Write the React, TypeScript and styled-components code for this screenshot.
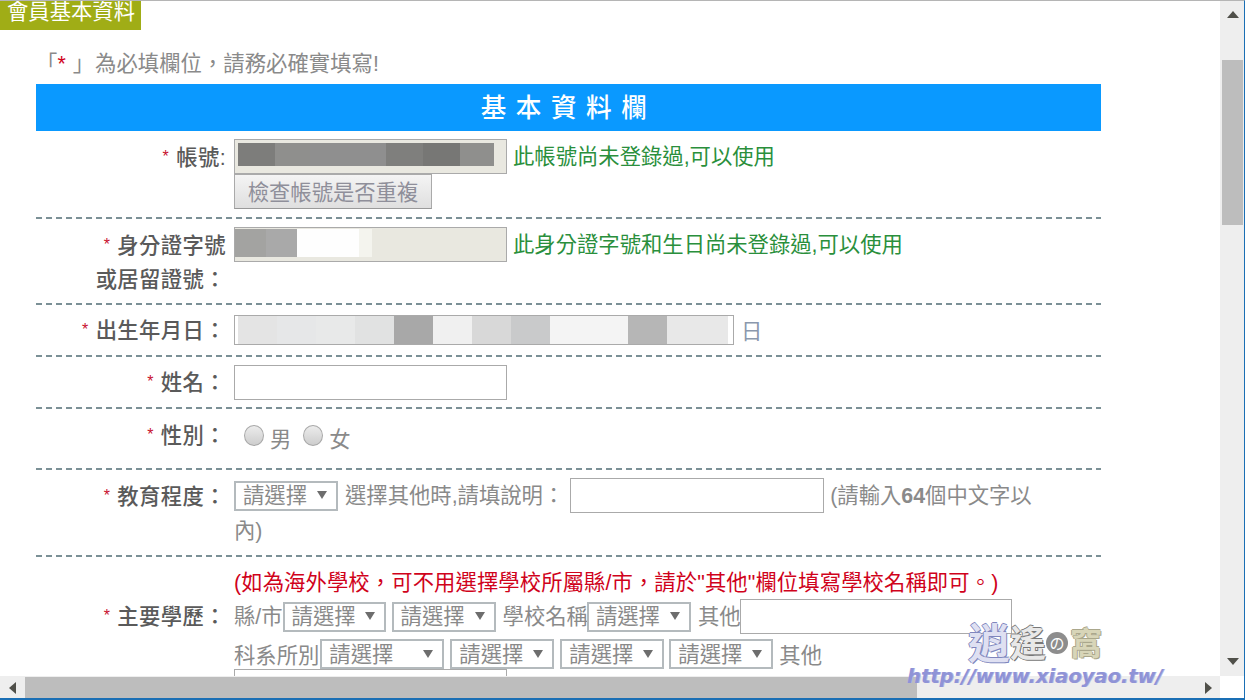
import React from 'react';
import styled, { createGlobalStyle } from 'styled-components';

const GlobalStyle = createGlobalStyle`
  html, body {
    margin: 0;
    padding: 0;
    height: 700px;
    overflow: hidden;
    background: #fff;
  }
`;

const Window = styled.div`
  position: relative;
  box-sizing: border-box;
  width: 1245px;
  height: 700px;
  display: flex;
  flex-direction: column;
  border-top: 1px solid #b5b5b5;
  border-right: 1px solid #1a6fb5;
  border-bottom: 2px solid #1a6fb5;
  font-family: 'Liberation Sans', 'Noto Sans CJK TC', sans-serif;
  font-size: 21.33px;
  color: #8a8a8a;
  background: #fff;
`;

const Body = styled.div`
  flex: 1;
  min-height: 0;
  display: flex;
`;

const Content = styled.div`
  flex: 1;
  min-width: 0;
  overflow: hidden;
`;

const Tab = styled.div`
  width: 141px;
  height: 29px;
  box-sizing: border-box;
  padding-left: 7px;
  background: #a0ad16;
  color: #fff;
  line-height: 22px;
`;

const Notice = styled.div`
  display: flex;
  margin: 19px 0 0 36px;
  height: 35px;
  line-height: 30px;
  color: #8a8a8a;
  letter-spacing: 0.05px;
`;

const Bracket = styled.span`
  width: 59px;
  white-space: pre;
`;

const Red = styled.span`
  color: #d0021b;
  margin: 0 7px 0 0;
`;

const Form = styled.div`
  width: 1065px;
  margin-left: 36px;
`;

const Banner = styled.div`
  box-sizing: border-box;
  height: 47px;
  padding-top: 2px;
  background: #0a99ff;
  color: #fff;
  font-size: 25.6px;
  font-weight: 500;
  letter-spacing: 9.5px;
  line-height: 45px;
  text-align: center;
`;

const Row = styled.div<{ $h: number }>`
  box-sizing: border-box;
  height: ${p => p.$h}px;
  display: grid;
  grid-template-columns: 190px 1fr;
  column-gap: 8px;
  background: repeating-linear-gradient(90deg, #7b9096 0 6px, transparent 6px 10px) left bottom / 100% 2px no-repeat;
`;

const LastRow = styled.div`
  display: grid;
  grid-template-columns: 190px 1fr;
  column-gap: 8px;
`;

const Label = styled.div<{ $top?: number }>`
  padding-top: ${p => p.$top ?? 9}px;
  text-align: right;
  line-height: 34px;
  font-weight: 500;
  letter-spacing: 0.4px;
  color: #5a5a5a;
`;

const Star = styled.span`
  color: #c8102e;
  font-size: 16px;
  font-weight: 400;
  vertical-align: 3px;
  margin-right: 7px;
`;

const Field = styled.div<{ $top?: number }>`
  padding-top: ${p => p.$top ?? 8}px;
  min-width: 0;
`;

const Line = styled.div<{ $h?: number; $mt?: number }>`
  display: flex;
  align-items: center;
  height: ${p => p.$h ?? 35}px;
  margin-top: ${p => p.$mt ?? 0}px;
  white-space: nowrap;
`;

const Input = styled.div<{ $w?: number; $h?: number; $filled?: boolean }>`
  box-sizing: border-box;
  flex: none;
  display: flex;
  width: ${p => p.$w ?? 273}px;
  height: ${p => p.$h ?? 35}px;
  border: 1px solid #aaa;
  background: ${p => (p.$filled ? '#e9e8e0' : '#fff')};
`;

const Mosaic = styled.div<{ $x: number; $y: number; $h: number }>`
  display: flex;
  height: ${p => p.$h}px;
  margin: ${p => p.$y}px 0 0 ${p => p.$x}px;
`;

const Cell = styled.div<{ $w: number; $c: string }>`
  width: ${p => p.$w}px;
  height: 100%;
  background: ${p => p.$c};
`;

const Status = styled.span`
  margin-left: 6px;
  padding-bottom: 4px;
  color: #2a8f3c;
`;

const CheckButton = styled.button`
  box-sizing: border-box;
  display: block;
  width: 198px;
  height: 35px;
  padding: 0 0 4px;
  border: 1px solid #aaa;
  border-bottom-color: #999;
  background: linear-gradient(#f4f4f4, #dfdfdf);
  color: #8f8f9a;
  font: inherit;
`;

const Select = styled.span<{ $w: number; $l?: number }>`
  box-sizing: border-box;
  flex: none;
  display: inline-flex;
  align-items: center;
  justify-content: space-between;
  width: ${p => p.$w}px;
  height: 30px;
  margin-left: ${p => p.$l ?? 0}px;
  padding: 0 9px 4px 7px;
  border: 2px solid #b4babd;
  background: #fff;
  color: #8a8a8a;
`;

const Arrow = styled.svg`
  width: 10px;
  height: 8px;
  margin-top: 3px;
  fill: #6d6d6d;
`;

const Word = styled.span<{ $l?: number; $r?: number; $up?: number; $tint?: boolean }>`
  margin-left: ${p => p.$l ?? 0}px;
  margin-right: ${p => p.$r ?? 0}px;
  padding-bottom: ${p => p.$up ?? 0}px;
  color: ${p => (p.$tint ? '#8b98ad' : 'inherit')};
`;

const Strong = styled.b`
  font-weight: 700;
`;

const Radio = styled.span`
  box-sizing: border-box;
  display: inline-block;
  flex: none;
  width: 20px;
  height: 21px;
  border-radius: 50%;
  border: 1px solid #a8a8a8;
  background: linear-gradient(#ececec, #cdcdcd);
`;

const RadioLine = styled.div`
  display: flex;
  align-items: flex-start;
  padding: 16px 0 0 10px;
`;

const RadioText = styled.span`
  margin: 0 12px 0 6px;
  line-height: 30px;
`;

const Wrapped = styled.div`
  line-height: 36px;
`;

const Warn = styled.div`
  height: 33px;
  line-height: 34px;
  color: #d0021b;
  letter-spacing: 0.1px;
  white-space: nowrap;
`;

const VBar = styled.div`
  flex: none;
  width: 24px;
  display: flex;
  flex-direction: column;
  background: #eeeeee;
`;

const VThumb = styled.div`
  width: 21px;
  height: 165px;
  margin: 42px 0 0 2px;
  background: #bdbdbd;
`;

const VArrow = styled.svg<{ $mt: number }>`
  flex: none;
  width: 12px;
  height: 7px;
  margin: ${p => p.$mt}px 0 0 7px;
  fill: #50504a;
`;

const BottomBar = styled.div`
  flex: none;
  height: 22px;
  display: flex;
`;

const HBar = styled.div`
  flex: 1;
  display: flex;
  align-items: center;
  background: #eeeeee;
  padding: 1px 0 0 9px;
`;

const HThumb = styled.div`
  width: 892px;
  height: 100%;
  margin: 0 288px 0 9px;
  background: #bdbdbd;
`;

const HArrow = styled.svg`
  flex: none;
  width: 7px;
  height: 12px;
  fill: #50504a;
`;

const Corner = styled.div`
  flex: none;
  width: 24px;
  background: #fff;
`;

const Watermark = styled.div`
  position: absolute;
  left: 907px;
  top: 616px;
  font-family: 'Noto Sans CJK TC', sans-serif;
  pointer-events: none;
`;

const WatermarkTitle = styled.div`
  display: flex;
  align-items: center;
  margin-left: 61px;
  height: 48px;
  line-height: 48px;
  font-weight: 700;
  white-space: nowrap;
`;

const Glyph = styled.span<{ $size: number; $w: number; $c: string; $edge: string }>`
  display: block;
  width: ${p => p.$w}px;
  font-size: ${p => p.$size}px;
  color: ${p => p.$c};
  text-shadow: 1px 1px 0 ${p => p.$edge}, -1px 0 0 ${p => p.$edge}, 0 -1px 0 ${p => p.$edge};
`;

const NoBadge = styled.span`
  flex: none;
  width: 22px;
  height: 22px;
  margin: 4px 2px 0 0;
  border-radius: 50%;
  background: #8d8d8d;
  color: #fff;
  font-size: 15px;
  font-weight: 400;
  line-height: 21px;
  text-align: center;
`;

const WatermarkUrl = styled.div`
  margin-top: 2px;
  font-family: 'DejaVu Sans', sans-serif;
  font-size: 19.5px;
  font-weight: 700;
  font-style: italic;
  line-height: 20px;
  white-space: nowrap;
  color: #8f93d6;
  text-shadow: 1px 0 0 #b9bbe6;
`;

const accountCells = [
  { w: 37, c: '#7d7d7b' },
  { w: 35, c: '#8f8f8d' },
  { w: 76, c: '#8f8f8f' },
  { w: 37, c: '#7f7f7d' },
  { w: 37, c: '#777775' },
  { w: 34, c: '#8f8f8d' },
];

const idCells = [
  { w: 31, c: '#a3a3a1' },
  { w: 31, c: '#a9a9a9' },
  { w: 62, c: '#fefefe' },
  { w: 13, c: '#f4f4ee' },
];

const birthCells = [
  { w: 39, c: '#e4e4e4' },
  { w: 39, c: '#e6e7e8' },
  { w: 39, c: '#e8e9e9' },
  { w: 39, c: '#e1e2e2' },
  { w: 39, c: '#a8a8a8' },
  { w: 39, c: '#f0f0f0' },
  { w: 39, c: '#d8d8d8' },
  { w: 39, c: '#c9cacb' },
  { w: 78, c: '#f4f4f4' },
  { w: 39, c: '#b6b6b6' },
  { w: 61, c: '#e8e8e8' },
];

function Pick({ w, l }: { w: number; l?: number }) {
  return (
    <Select $w={w} $l={l}>
      請選擇
      <Arrow viewBox="0 0 10 8">
        <path d="M0 0h10L5 8z" />
      </Arrow>
    </Select>
  );
}

function Cells({ list }: { list: { w: number; c: string }[] }) {
  return (
    <>
      {list.map((cell, i) => (
        <Cell key={i} $w={cell.w} $c={cell.c} />
      ))}
    </>
  );
}

export default function App() {
  return (
    <Window>
      <GlobalStyle />
      <Body>
        <Content>
          <Tab>會員基本資料</Tab>
          <Notice>
            <Bracket>
              「<Red>*</Red>」
            </Bracket>
            為必填欄位，請務必確實填寫!
          </Notice>
          <Form>
            <Banner>基本資料欄</Banner>

            <Row $h={88}>
              <Label>
                <Star>*</Star>帳號:
              </Label>
              <Field>
                <Line>
                  <Input $filled>
                    <Mosaic $x={3} $y={3} $h={23}>
                      <Cells list={accountCells} />
                    </Mosaic>
                  </Input>
                  <Status>此帳號尚未登錄過,可以使用</Status>
                </Line>
                <CheckButton>檢查帳號是否重複</CheckButton>
              </Field>
            </Row>

            <Row $h={86}>
              <Label>
                <Star>*</Star>身分證字號
                <br />
                或居留證號：
              </Label>
              <Field>
                <Line>
                  <Input $filled>
                    <Mosaic $x={0} $y={1} $h={28}>
                      <Cells list={idCells} />
                    </Mosaic>
                  </Input>
                  <Status>此身分證字號和生日尚未登錄過,可以使用</Status>
                </Line>
              </Field>
            </Row>

            <Row $h={52}>
              <Label $top={8}>
                <Star>*</Star>出生年月日：
              </Label>
              <Field $top={10}>
                <Line $h={30}>
                  <Input $w={500} $h={30}>
                    <Mosaic $x={3} $y={0} $h={28}>
                      <Cells list={birthCells} />
                    </Mosaic>
                  </Input>
                  <Word $l={7} $up={2} $tint>日</Word>
                </Line>
              </Field>
            </Row>

            <Row $h={52}>
              <Label $top={8}>
                <Star>*</Star>姓名：
              </Label>
              <Field>
                <Input />
              </Field>
            </Row>

            <Row $h={61}>
              <Label>
                <Star>*</Star>性別：
              </Label>
              <Field $top={0}>
                <RadioLine>
                  <Radio />
                  <RadioText>男</RadioText>
                  <Radio />
                  <RadioText>女</RadioText>
                </RadioLine>
              </Field>
            </Row>

            <Row $h={87}>
              <Label>
                <Star>*</Star>教育程度：
              </Label>
              <Field>
                <Line>
                  <Pick w={104} />
                  <Word $l={7} $r={6} $up={4}>選擇其他時,請填說明：</Word>
                  <Input $w={254} />
                  <Word $l={6} $up={4}>
                    (請輸入<Strong>64</Strong>個中文字以
                  </Word>
                </Line>
                <Wrapped>內)</Wrapped>
              </Field>
            </Row>

            <LastRow>
              <Label $top={42}>
                <Star>*</Star>主要學歷：
              </Label>
              <Field $top={9}>
                <Warn>(如為海外學校，可不用選擇學校所屬縣/市，請於"其他"欄位填寫學校名稱即可。)</Warn>
                <Line>
                  <Word $up={4}>縣/市</Word>
                  <Pick w={103} />
                  <Pick w={104} l={6} />
                  <Word $l={7} $r={-1} $up={4}>學校名稱</Word>
                  <Pick w={104} />
                  <Word $l={7} $r={-1} $up={4}>其他</Word>
                  <Input $w={272} />
                </Line>
                <Line $h={30} $mt={5}>
                  <Word $r={1} $up={2}>科系所別</Word>
                  <Pick w={124} />
                  <Pick w={104} l={6} />
                  <Pick w={104} l={6} />
                  <Pick w={104} l={5} />
                  <Word $l={6} $up={2}>其他</Word>
                </Line>
                <Input />
              </Field>
            </LastRow>
          </Form>
        </Content>
        <VBar>
          <VArrow $mt={10} viewBox="0 0 12 7">
            <path d="M6 0l6 7H0z" />
          </VArrow>
          <VThumb />
          <VArrow $mt={433} viewBox="0 0 12 7">
            <path d="M0 0h12L6 7z" />
          </VArrow>
        </VBar>
      </Body>
      <BottomBar>
        <HBar>
          <HArrow viewBox="0 0 7 12">
            <path d="M7 0v12L0 6z" />
          </HArrow>
          <HThumb />
          <HArrow viewBox="0 0 7 12">
            <path d="M0 0l7 6-7 6z" />
          </HArrow>
        </HBar>
        <Corner />
      </BottomBar>
      <Watermark>
        <WatermarkTitle>
          <Glyph $size={42} $w={42} $c="#dfe0f2" $edge="#8086bd">逍</Glyph>
          <Glyph $size={36} $w={36} $c="#e8e8e8" $edge="#777777">遙</Glyph>
          <NoBadge>の</NoBadge>
          <Glyph $size={32} $w={33} $c="#d8d5b8" $edge="#aaa78c">窩</Glyph>
        </WatermarkTitle>
        <WatermarkUrl>http://www.xiaoyao.tw/</WatermarkUrl>
      </Watermark>
    </Window>
  );
}
